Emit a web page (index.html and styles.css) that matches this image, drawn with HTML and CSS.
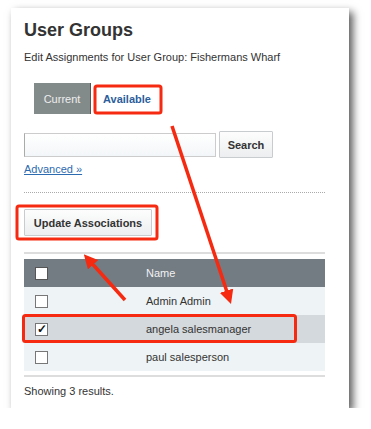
FILE: index.html
```html
<!DOCTYPE html>
<html lang="en">
<head>
    <meta charset="UTF-8">
    <title>User Groups</title>
    <link rel="stylesheet" href="styles.css">
</head>
<body>
    <div class="card">
        <h1>User Groups</h1>
        <p class="subtitle">Edit Assignments for User Group: Fishermans Wharf</p>

        <div class="tabs">
            <span class="tab current">Current</span>
            <span class="tab available">Available</span>
        </div>

        <form class="search">
            <div class="search-row">
                <input type="text" class="search-input">
                <button type="button" class="btn search-btn">Search</button>
            </div>
            <a href="#" class="advanced">Advanced &raquo;</a>
        </form>

        <div class="dotted"></div>

        <div class="update-wrap">
            <button type="button" class="btn update">Update Associations</button>
        </div>

        <div class="solid"></div>

        <table class="users">
            <thead>
                <tr>
                    <th class="check"><span class="box"></span></th>
                    <th>Name</th>
                </tr>
            </thead>
            <tbody>
                <tr>
                    <td class="check"><span class="box"></span></td>
                    <td>Admin Admin</td>
                </tr>
                <tr class="selected">
                    <td class="check"><span class="box checked">&#10003;</span></td>
                    <td>angela salesmanager</td>
                </tr>
                <tr>
                    <td class="check"><span class="box"></span></td>
                    <td>paul salesperson</td>
                </tr>
            </tbody>
        </table>

        <p class="results">Showing 3 results.</p>

        <!-- annotation overlay -->
        <svg class="marks" width="371" height="429" viewBox="0 0 371 429">
            <defs>
                <marker id="head" markerWidth="4" markerHeight="4" refX="2.2" refY="2" orient="auto" markerUnits="strokeWidth">
                    <path d="M0,0 L4,2 L0,4 Z" fill="#f52a10"/>
                </marker>
            </defs>
            <rect x="95" y="86" width="66" height="27" rx="2" class="hl"/>
            <rect x="17" y="206" width="140" height="33" rx="2" class="hl"/>
            <rect x="23.5" y="315.5" width="272" height="26" rx="2" class="hl"/>
            <line x1="172" y1="126" x2="229" y2="298" class="arrow" marker-end="url(#head)"/>
            <line x1="125" y1="300" x2="88" y2="259" class="arrow" marker-end="url(#head)"/>
        </svg>
    </div>
</body>
</html>
```

FILE: styles.css
```css
body {
    margin: 0;
    padding: 0;
    background: #fff;
    font-family: "Liberation Sans", Arial, sans-serif;
    color: #333;
}
.card {
    position: relative;
    width: 338px;
    height: 400px;
    margin: 8px 0 0 11px;
    padding: 10px 24px 0 13px;
    background: #fff;
    box-shadow: 4px 4px 8px rgba(0, 0, 0, 0.65);
    box-sizing: border-box;
}
h1 {
    margin: 0;
    font-size: 18px;
    line-height: 24px;
    font-weight: bold;
    color: #333;
}
.subtitle {
    margin: 8px 0 0;
    font-size: 11px;
    line-height: 14px;
}
.tabs {
    display: flex;
    margin: 19px 0 0 10px;
    height: 31px;
}
.tab {
    display: flex;
    align-items: center;
    font-size: 11px;
}
.tab.current {
    width: 57px;
    justify-content: center;
    background: #838a8a;
    color: #eee;
    border-right: 1px solid #555;
    box-sizing: border-box;
}
.tab.available {
    padding: 0 12px;
    color: #2c5e9c;
    font-weight: bold;
}
.search {
    margin-top: 17px;
}
.search-row {
    display: flex;
    align-items: center;
    gap: 3px;
}
.search-input {
    width: 192px;
    height: 24px;
    margin: 0;
    border: 1px solid #ccc;
    border-left: 1px solid #aaa;
    background: linear-gradient(#fff, #f3f6f8);
    box-sizing: border-box;
    padding: 0 4px;
}
.btn {
    margin: 0;
    padding: 0 9px;
    height: 27px;
    font-family: "Liberation Sans", Arial, sans-serif;
    font-size: 11px;
    font-weight: bold;
    color: #333;
    background: linear-gradient(#fdfdfd, #eceeef);
    border: 1px solid #c8cccf;
    border-radius: 1px;
}
.search-btn {
    width: 54px;
    padding: 0;
}
.advanced {
    display: inline-block;
    margin-top: 4px;
    font-size: 11px;
    line-height: 14px;
    color: #2c6bb0;
    text-decoration: underline;
}
.dotted {
    margin-top: 15px;
    border-top: 1px dotted #aaa;
}
.update-wrap {
    margin-top: 16px;
}
.btn.update {
    width: 128px;
    padding: 0;
}
.solid {
    margin-top: 16px;
    border-top: 2px solid #ddd;
}
.users {
    width: 100%;
    margin-top: 5px;
    border-collapse: collapse;
    font-size: 11px;
}
.users th {
    height: 28px;
    background: #737b83;
    color: #f2f2f2;
    font-weight: normal;
    text-align: left;
    padding: 0;
}
.users td {
    height: 28px;
    padding: 0;
    background: #eef3f6;
}
.users .check {
    width: 122px;
    padding-left: 11px;
    box-sizing: border-box;
}
.users tr.selected td {
    background: #d3d9dc;
}
.box {
    display: block;
    width: 11px;
    height: 11px;
    border: 1px solid #777;
    background: #fff;
    font-size: 12px;
    font-weight: bold;
    line-height: 11px;
    text-align: center;
    color: #111;
}
th .box {
    border-color: #555;
}
.results {
    margin: 4px 0 0;
    padding-top: 8px;
    border-top: 2px solid #ddd;
    font-size: 11px;
}
.marks {
    position: absolute;
    left: -11px;
    top: -8px;
    pointer-events: none;
}
.hl {
    fill: none;
    stroke: #f52a10;
    stroke-width: 3;
}
.arrow {
    stroke: #f52a10;
    stroke-width: 3.5;
}
```
